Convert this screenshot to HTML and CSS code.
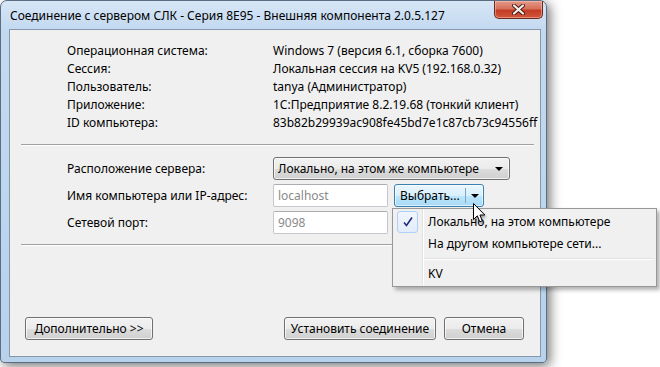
FILE: index.html
```html
<!DOCTYPE html>
<html lang="ru">
<head>
    <meta charset="UTF-8">
    <title>Соединение с сервером СЛК</title>
    <link rel="stylesheet" href="styles.css">
</head>
<body>
<div class="desk">
    <div class="window">
        <div class="titlebar">
            <span class="title">Соединение с сервером СЛК - Серия 8E95 - Внешняя компонента 2.0.5.127</span>
            <div class="close">
                <svg width="13" height="11" viewBox="0 0 13 11">
                    <path d="M2 1.5 L11 9.5 M11 1.5 L2 9.5" stroke="#4a1a12" stroke-width="4" stroke-linecap="round"/>
                    <path d="M2 1.5 L11 9.5 M11 1.5 L2 9.5" stroke="#f4f0ee" stroke-width="2.2" stroke-linecap="round"/>
                </svg>
            </div>
        </div>
        <div class="client">
            <div class="info">
                <span>Операционная система:</span><span>Windows 7 (версия 6.1, сборка 7600)</span>
                <span>Сессия:</span><span>Локальная сессия на KV5 (192.168.0.32)</span>
                <span>Пользователь:</span><span>tanya (Администратор)</span>
                <span>Приложение:</span><span>1С:Предприятие 8.2.19.68 (тонкий клиент)</span>
                <span>ID компьютера:</span><span>83b82b29939ac908fe45bd7e1c87cb73c94556ff</span>
            </div>
            <div class="sep"></div>
            <div class="form">
                <span class="lbl">Расположение сервера:</span>
                <div class="combo">
                    <span>Локально, на этом же компьютере</span>
                    <i class="arrow"></i>
                </div>
                <span class="lbl">Имя компьютера или IP-адрес:</span>
                <div class="line">
                    <div class="input">localhost</div>
                    <div class="split">
                        <span class="split-text">Выбрать...</span>
                        <span class="split-drop"><i class="arrow"></i></span>
                    </div>
                </div>
                <span class="lbl">Сетевой порт:</span>
                <div class="line">
                    <div class="input">9098</div>
                </div>
            </div>
            <div class="sep sep2"></div>
            <div class="buttons">
                <button class="btn btn-more">Дополнительно &gt;&gt;</button>
                <div class="right">
                    <button class="btn btn-ok">Установить соединение</button>
                    <button class="btn btn-cancel">Отмена</button>
                </div>
            </div>
        </div>
    </div>

    <div class="menu">
        <div class="item checked">
            <span class="check">
                <svg width="12" height="12" viewBox="0 0 12 12"><path d="M2 6.5 L4.5 9.5 L10 1.5" fill="none" stroke="#1d2a7c" stroke-width="1.6"/></svg>
            </span>
            Локально, на этом компьютере
        </div>
        <div class="item">На другом компьютере сети...</div>
        <div class="msep"></div>
        <div class="item">KV</div>
    </div>

    <svg class="cursor" width="14" height="22" viewBox="0 0 14 22">
        <path d="M0.5 0.5 L0.5 16.5 L4.3 12.8 L6.8 18.8 L9.3 17.8 L6.9 12 L11.8 12 Z" fill="#fff" stroke="#000" stroke-width="1" stroke-linejoin="miter"/>
    </svg>
</div>
</body>
</html>
```

FILE: styles.css
```css
*{box-sizing: border-box; margin: 0; padding: 0;}
body{width: 660px; height: 367px; overflow: hidden; background: #fff; font-family: "Noto Sans", "Open Sans", sans-serif; font-size: 12px; color: #000;}
.desk{position: relative; width: 660px; height: 367px;}

.window{width: 547px; height: 363px; border: 1px solid #5b6d82; border-radius: 7px 7px 4px 4px; background: linear-gradient(to bottom, #d7e6f6 0, #c3d9f0 28px, #b8d2ec 100%); display: flex; flex-direction: column; box-shadow: 3px 3px 12px rgba(0,0,0,.55);}
.titlebar{height: 28px; display: flex; justify-content: space-between; align-items: center; padding-left: 9px;}
.title{white-space: nowrap; color: #000;}
.close{align-self: flex-start; width: 49px; height: 18px; margin-right: 3px; border: 1px solid #6b2a1c; border-top: none; border-radius: 0 0 5px 5px; background: linear-gradient(to bottom, #e49a8a 0, #d6705a 45%, #c23d24 55%, #d0553a 100%); display: flex; align-items: center; justify-content: center; box-shadow: inset 0 0 0 1px rgba(255,210,200,.45);}

.client{flex: 1; margin: 0 5px 5px 8px; border: 1px solid #8597ab; background: #f0f0f0; display: flex; flex-direction: column;}
.info{display: grid; grid-template-columns: 206px auto; line-height: 18px; padding: 12px 0 0 57px; white-space: nowrap;}
.sep{height: 2px; margin: 12px 6px 0 11px; border-top: 1px solid #a0a0a0; border-bottom: 1px solid #fff;}
.sep2{margin-top: 10px;}

.form{display: grid; grid-template-columns: 206px auto; grid-auto-rows: 23px; row-gap: 4px; margin-top: 11px; padding-left: 57px; white-space: nowrap;}
.lbl{align-self: center;}
.line{display: flex; gap: 6px;}
.combo{width: 237px; height: 23px; border: 1px solid #707070; border-radius: 3px; background: linear-gradient(to bottom, #f2f2f2 0%, #ebebeb 50%, #dddddd 51%, #cfcfcf 100%); box-shadow: inset 0 0 0 1px rgba(255,255,255,.7); display: flex; align-items: center; justify-content: space-between; padding: 0 6px 0 4px;}
.arrow{display: block; width: 0; height: 0; border-left: 4px solid transparent; border-right: 4px solid transparent; border-top: 4px solid #000;}
.input{width: 115px; height: 23px; border: 1px solid #c4c7cb; border-top-color: #abadb3; border-radius: 2px; background: #fff; color: #8a8a8a; padding-left: 4px; line-height: 21px;}
.split{width: 90px; height: 23px; border: 1px solid #3c7fb1; border-radius: 3px; background: linear-gradient(to bottom, #eaf6fd 0%, #d9f0fc 50%, #bee6fd 51%, #a7d9f5 100%); box-shadow: inset 0 0 0 1px rgba(255,255,255,.6); display: flex; align-items: center;}
.split-text{flex: 1; padding-left: 5px;}
.split-drop{width: 18px; height: 15px; border-left: 1px solid #7fa5c4; display: flex; align-items: center; justify-content: center;}

.buttons{margin-top: auto; display: flex; justify-content: space-between; padding: 0 16px 16px 15px;}
.right{display: flex; gap: 8px;}
.btn{height: 23px; border: 1px solid #707070; border-radius: 3px; background: linear-gradient(to bottom, #f2f2f2 0%, #ebebeb 50%, #dddddd 51%, #cfcfcf 100%); box-shadow: inset 0 0 0 1px rgba(255,255,255,.7); font: inherit; color: #000;}
.btn-more{width: 128px;}
.btn-ok{width: 152px;}
.btn-cancel{width: 80px;}

.menu{position: absolute; left: 392px; top: 208px; width: 265px; height: 79px; border: 1px solid #979797; padding: 2px 2px 1px; background: linear-gradient(to right, #f0f0f0 0, #f0f0f0 29px, #e2e3e3 29px, #e2e3e3 30px, #fff 30px, #fff 31px, #f0f0f0 31px); box-shadow: 3px 3px 4px rgba(0,0,0,.3); white-space: nowrap;}
.item{position: relative; height: 22px; line-height: 22px; padding-left: 33px; color: #000;}
.check{position: absolute; left: 2px; top: 0; width: 21px; height: 22px; border: 1px solid #aecff7; border-radius: 3px; background: linear-gradient(to bottom, #f1f6fd, #e2ecfa); display: flex; align-items: center; justify-content: center;}
.msep{height: 8px; margin-left: 29px; background: linear-gradient(to bottom, transparent 3px, #e0e0e0 3px, #e0e0e0 4px, #fff 4px, #fff 5px, transparent 5px);}

.cursor{position: absolute; left: 473px; top: 203px; filter: drop-shadow(1px 2px 1px rgba(0,0,0,.35));}
```
